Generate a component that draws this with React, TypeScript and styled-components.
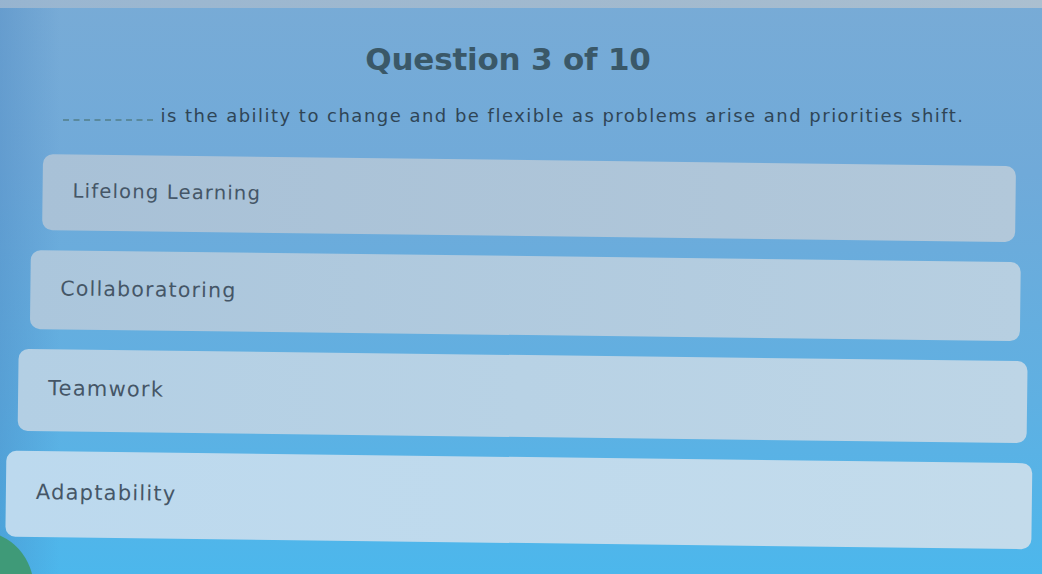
import React from 'react'
import styled, { createGlobalStyle } from 'styled-components'

const GlobalStyle = createGlobalStyle`
  html, body {
    margin: 0;
    padding: 0;
  }
  body {
    background: #62aee0;
    overflow: hidden;
  }
`

const options = [
  { label: 'Lifelong Learning', left: 43, right: 26, height: 72, size: 19.5, tone: '#a8c1d7', toneEnd: '#b2c8da' },
  { label: 'Collaboratoring', left: 32, right: 20, height: 75, size: 20.5, tone: '#abc6dc', toneEnd: '#b7cfe1' },
  { label: 'Teamwork', left: 21, right: 12, height: 78, size: 21, tone: '#b3cfe4', toneEnd: '#bdd5e6' },
  { label: 'Adaptability', left: 10, right: 6, height: 82, size: 21, tone: '#bcd9ee', toneEnd: '#c3dbeb' },
]

export default function App () {
  return (
    <>
      <GlobalStyle />
      <Screen>
        <TopEdge />
        <Title>Question 3 of 10</Title>
        <Prompt>
          <Blank />
          is the ability to change and be flexible as problems arise and priorities shift.
        </Prompt>
        <OptionList>
          {options.map(opt => (
            <Option
              key={opt.label}
              $left={opt.left}
              $right={opt.right}
              $height={opt.height}
              $size={opt.size}
              $tone={opt.tone}
              $toneEnd={opt.toneEnd}
            >
              {opt.label}
            </Option>
          ))}
        </OptionList>
        <CornerBlob />
      </Screen>
    </>
  )
}

const Screen = styled.div`
  position: relative;
  width: 1042px;
  height: 574px;
  overflow: hidden;
  display: flex;
  flex-direction: column;
  background:
    linear-gradient(90deg, rgba(70, 130, 190, 0.35) 0px, rgba(70, 130, 190, 0) 60px),
    linear-gradient(180deg, #78abd6 0%, #70aad9 30%, #5fb0e2 70%, #4cb7ec 100%);
`

const TopEdge = styled.div`
  height: 8px;
  flex-shrink: 0;
  background: linear-gradient(90deg, #9fb8d0 0%, #a9bccd 60%, #b4c3cf 100%);
  opacity: 0.85;
`

const Title = styled.h1`
  margin: 33px 26px 0 0;
  font-family: 'DejaVu Sans', 'Liberation Sans', sans-serif;
  font-size: 31px;
  line-height: 36px;
  font-weight: 700;
  color: #3a5868;
  text-align: center;
  letter-spacing: -0.2px;
`

const Prompt = styled.p`
  margin: 27px 0 0;
  padding-right: 14px;
  font-family: 'DejaVu Sans', 'Liberation Sans', sans-serif;
  font-size: 18px;
  line-height: 24px;
  letter-spacing: 1.48px;
  color: #2f4556;
  display: flex;
  justify-content: center;
  align-items: center;
  white-space: nowrap;
`

const Blank = styled.span`
  display: inline-block;
  width: 90px;
  height: 2px;
  margin: 6px 7px 0 0;
  border-bottom: 2px dashed rgba(70, 110, 110, 0.55);
`

const OptionList = styled.div`
  margin-top: 32px;
  display: flex;
  flex-direction: column;
  gap: 20px;
  transform: rotate(0.7deg);
  transform-origin: 50% 0;
`

const Option = styled.div<{ $left: number; $right: number; $height: number; $size: number; $tone: string; $toneEnd: string }>`
  margin: 0 ${p => p.$right}px 0 ${p => p.$left}px;
  height: ${p => p.$height}px;
  padding: 0 30px 4px;
  display: flex;
  align-items: center;
  border-radius: 10px;
  background: linear-gradient(90deg, ${p => p.$tone} 0%, ${p => p.$toneEnd} 100%);
  font-family: 'DejaVu Sans', 'Liberation Sans', sans-serif;
  font-size: ${p => p.$size}px;
  letter-spacing: 1.2px;
  color: #455667;
`

const CornerBlob = styled.div`
  position: absolute;
  left: -70px;
  bottom: -74px;
  width: 104px;
  height: 116px;
  border-radius: 50%;
  background: #3f9a78;
`
